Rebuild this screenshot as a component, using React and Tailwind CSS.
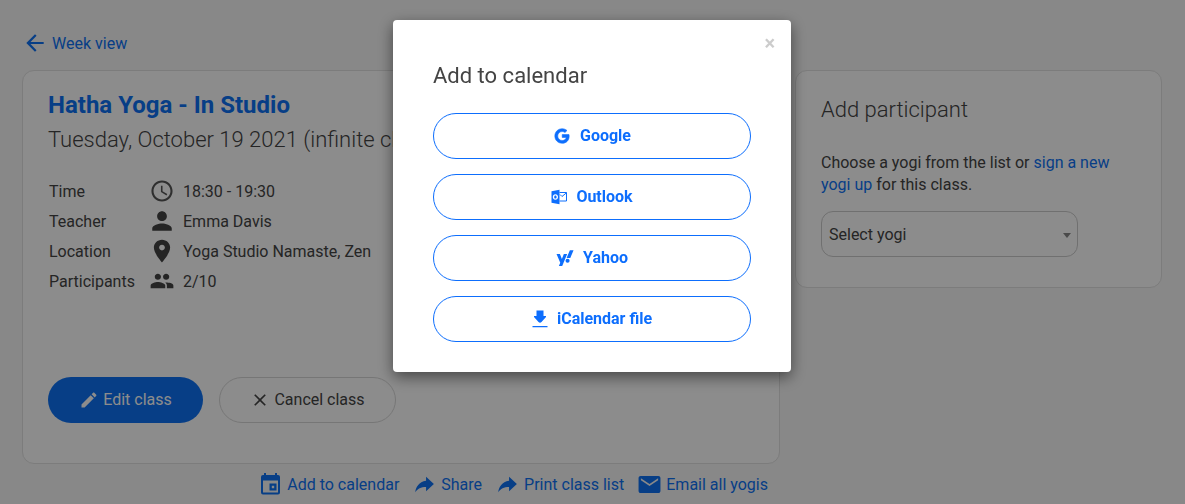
import {
  IoMdArrowBack,
  IoMdTime,
  IoMdPerson,
  IoMdPin,
  IoMdPeople,
  IoMdCreate,
  IoMdClose,
  IoMdShareAlt,
  IoMdMail,
  IoLogoGoogle,
} from "react-icons/io";
import { FaYahoo } from "react-icons/fa";

const details = [
  { label: "Time", Icon: IoMdTime, value: "18:30 - 19:30" },
  { label: "Teacher", Icon: IoMdPerson, value: "Emma Davis" },
  { label: "Location", Icon: IoMdPin, value: "Yoga Studio Namaste, Zen" },
  { label: "Participants", Icon: IoMdPeople, value: "2/10" },
];

function CalendarIcon({ className }) {
  return (
    <svg viewBox="0 0 25 25" className={className} fill="currentColor" aria-hidden="true">
      <path fillRule="evenodd" d="M6 1h2v2h9V1h2v2h1a2 2 0 0 1 2 2V20.500a2 2 0 0 1-2 2H5a2 2 0 0 1-2-2V5a2 2 0 0 1 2-2h1ZM5 8.500v12h15v-12Z" />
      <path fillRule="evenodd" d="M11.500 11.500h7v7h-7Zm2.300 2.300v2.400h2.400v-2.400Z" />
    </svg>
  );
}

const links = [
  { Icon: CalendarIcon, label: "Add to calendar" },
  { Icon: IoMdShareAlt, label: "Share" },
  { Icon: IoMdShareAlt, label: "Print class list" },
  { Icon: IoMdMail, label: "Email all yogis" },
];

function OutlookIcon() {
  return (
    <svg viewBox="0 0 16 16" className="size-4" fill="currentColor" aria-hidden="true">
      <path fillRule="evenodd" d="M.5 2.200 8.500.8v14.400L.5 13.800ZM4.400 5.200C2.800 5.200 1.800 6.400 1.800 8s1 2.800 2.600 2.800S7 9.600 7 8 6 5.200 4.400 5.200Zm0 1.200c.8 0 1.200.7 1.200 1.600s-.4 1.600-1.200 1.600S3.200 8.900 3.200 8s.4-1.600 1.200-1.600Z" />
      <path d="M8.500 3.500h7v8.500h-7" fill="none" stroke="currentColor" strokeWidth="1" />
      <path d="m9 5.500 2 2 4.500-3.700" fill="none" stroke="currentColor" strokeWidth="1" />
    </svg>
  );
}

function DownloadIcon() {
  return (
    <svg viewBox="0 0 16 18" className="h-[18px] w-4" fill="currentColor" aria-hidden="true">
      <path d="M4.500.5h7v5.500H14v1L9.500 12q-1.500 1.400-3 0L2 7V6h2.500ZM.5 16h15v1.200H.5Z" />
    </svg>
  );
}

const calendars = [
  { icon: <IoLogoGoogle className="size-[18px] stroke-current stroke-[16px]" />, label: "Google" },
  { icon: <OutlookIcon />, label: "Outlook" },
  { icon: <FaYahoo className="size-[18px]" />, label: "Yahoo" },
  { icon: <DownloadIcon />, label: "iCalendar file" },
];

export default function App() {
  return (
    <div className="min-h-screen bg-[#f7f7f7] font-['Roboto',sans-serif] text-base text-[#444]">
      <main className="mx-auto max-w-[1185px] pt-[31px] pr-[23px] pl-[22px]">
        <a href="#week" className="flex w-fit items-center gap-1 text-[#0d72f5]">
          <IoMdArrowBack className="size-[26px] -translate-y-px" />
          Week view
        </a>

        <div className="mt-[13px] flex items-start gap-[15px]">
          <div className="min-w-0 grow-[2] basis-0">
            <section className="rounded-xl border border-[#e2e2e2] bg-white px-[25px] pt-4 pb-10">
              <h1 className="text-2xl leading-[36px] font-bold text-[#0d72f5]">Hatha Yoga - In Studio</h1>
              <p className="text-[22px] leading-[34px] font-light">Tuesday, October 19 2021 (infinite class)</p>
              <table className="mt-5">
                <tbody>
                  {details.map(({ label, Icon, value }) => (
                    <tr key={label} className="h-[30px]">
                      <th scope="row" className="w-[101px] p-0 pl-px text-left font-normal">{label}</th>
                      <td className="w-[34px] p-0">
                        <Icon className="size-[26px] -translate-y-px" />
                      </td>
                      <td className="p-0">{value}</td>
                    </tr>
                  ))}
                </tbody>
              </table>
              <div className="mt-20 flex gap-4">
                <button type="button" className="flex h-[46px] w-[155px] items-center justify-center gap-1 rounded-full bg-[#0d72f5] text-white">
                  <IoMdCreate className="size-5" />
                  Edit class
                </button>
                <button type="button" className="flex h-[46px] w-[177px] items-center justify-center gap-1 rounded-full border border-[#d8d8d8]">
                  <IoMdClose className="size-5" />
                  Cancel class
                </button>
              </div>
            </section>
            <nav className="mt-2 flex justify-end gap-[13px] pr-3">
              {links.map(({ Icon, label }) => (
                <a key={label} href="#action" className="flex items-center gap-1 text-[#0d72f5]">
                  <Icon className="size-[25px]" />
                  {label}
                </a>
              ))}
            </nav>
          </div>

          <section className="w-[367px] shrink-0 rounded-xl border border-[#e2e2e2] bg-white px-[25px] pt-[22px] pb-[30px]">
            <h2 className="text-[22px] leading-[34px] font-light">Add participant</h2>
            <p className="mt-[25px] leading-[22px]">
              Choose a yogi from the list or <a href="#signup" className="text-[#0d72f5]">sign a new yogi up</a> for this class.
            </p>
            <div className="relative mt-[15px] w-[257px]">
              <select aria-label="Select yogi" className="h-[46px] w-full appearance-none rounded-xl border border-[#ccc] bg-white px-[7px] pt-px">
                <option>Select yogi</option>
              </select>
              <svg viewBox="0 0 8 5" className="pointer-events-none absolute top-[22px] right-[7px] h-[5px] w-2" fill="#888" aria-hidden="true">
                <path d="M0 0h8L4 5Z" />
              </svg>
            </div>
          </section>
        </div>
      </main>

      <div className="fixed inset-0 flex items-start justify-center bg-black/45 pt-5 pr-px">
        <div role="dialog" aria-modal="true" aria-labelledby="dialog-title" className="relative w-full max-w-[398px] rounded bg-white px-10 pt-10 pb-[30px] shadow-[0_5px_15px_rgba(0,0,0,0.5)]">
          <button type="button" aria-label="Close" className="absolute top-[13px] right-4 text-xl leading-5 font-bold text-[#ccc]">
            ×
          </button>
          <h2 id="dialog-title" className="text-[22px] leading-[32px]">Add to calendar</h2>
          <div className="mt-[21px] flex flex-col gap-[15px]">
            {calendars.map(({ icon, label }) => (
              <button key={label} type="button" className="flex h-[46px] items-center justify-center gap-[9px] rounded-full border border-[#0d6efd] font-bold text-[#0d6efd]">
                {icon}
                {label}
              </button>
            ))}
          </div>
        </div>
      </div>
    </div>
  );
}
